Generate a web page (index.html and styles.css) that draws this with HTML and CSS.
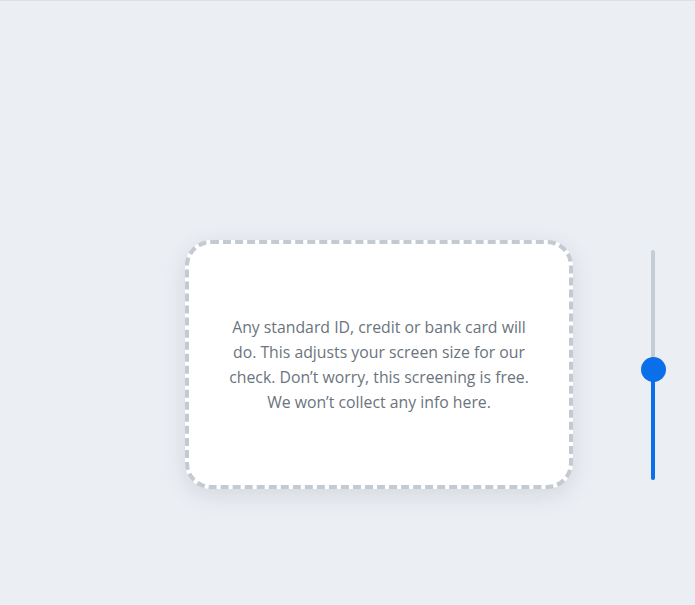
FILE: index.html
```html
<!DOCTYPE html>
<html lang="en">
<head>
<meta charset="utf-8">
<title>Card calibration</title>
<link rel="stylesheet" href="styles.css">
</head>
<body>
<main class="page">
  <div class="stage">
    <div class="card">
      <p class="card-text">Any standard ID, credit or bank card will do. This adjusts your screen size for our check. Don’t worry, this screening is free. We won’t collect any info here.</p>
    </div>
    <div class="slider" role="slider" aria-valuemin="0" aria-valuemax="100" aria-valuenow="49" aria-orientation="vertical">
      <div class="slider-track">
        <div class="slider-fill" style="height: 48%;"></div>
        <div class="slider-thumb" style="bottom: 48%;"></div>
      </div>
    </div>
  </div>
</main>
</body>
</html>
```
FILE: styles.css
```css
* { box-sizing: border-box; }
html, body {
  margin: 0;
  padding: 0;
}
body {
  background: #ebeef3;
  font-family: "Open Sans", "Noto Sans", Arial, sans-serif;
  border-top: 1px solid #dde1e6;
  height: 605px;
  overflow: hidden;
}
.page {
  padding: 239px 0 0 185px;
}
.stage {
  display: flex;
  align-items: center;
}
.card {
  width: 388px;
  height: 249px;
  background: #ffffff;
  border: 4px dashed #c3cad1;
  border-radius: 26px;
  box-shadow: 0 6px 22px rgba(60, 70, 90, 0.13);
  display: flex;
  align-items: center;
  justify-content: center;
  padding: 0 34px;
}
.card-text {
  margin: 0;
  text-align: center;
  color: #6b747e;
  font-size: 15.8px;
  line-height: 25px;
}
.slider {
  margin-left: 78px;
  height: 230px;
  width: 4px;
  display: flex;
}
.slider-track {
  position: relative;
  width: 4px;
  height: 100%;
  background: #c5ccd4;
  border-radius: 2px;
}
.slider-fill {
  position: absolute;
  left: 0;
  bottom: 0;
  width: 4px;
  background: #0a6fe8;
  border-radius: 2px;
}
.slider-thumb {
  position: absolute;
  left: 50%;
  width: 25px;
  height: 25px;
  margin-left: -12.5px;
  margin-bottom: -12.5px;
  border-radius: 50%;
  background: #0a6fe8;
}
```
